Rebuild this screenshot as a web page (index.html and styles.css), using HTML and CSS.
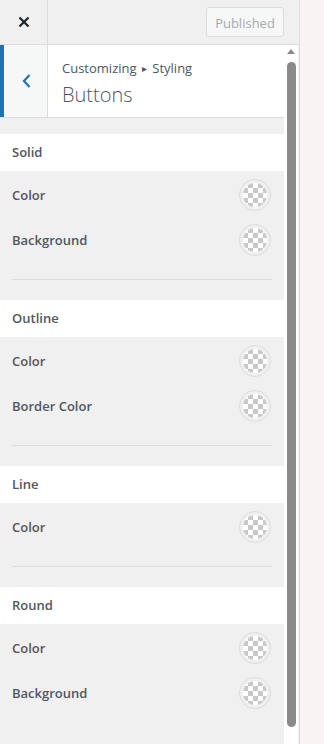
FILE: index.html
```html
<!DOCTYPE html>
<html lang="en">
<head>
  <meta charset="UTF-8" />
  <title>Customizing Buttons</title>
  <link rel="stylesheet" href="styles.css">
</head>
<body>
  <div class="sidebar">
    <div class="topbar">
      <button class="close" aria-label="Close">
        <svg width="12" height="12" viewBox="0 0 12 12"><path d="M1.5 1.5 L10.5 10.5 M10.5 1.5 L1.5 10.5" stroke="#1d2327" stroke-width="2.2"/></svg>
      </button>
      <button class="publish" disabled>Published</button>
    </div>

    <div class="pane">
      <div class="content">
        <div class="heading">
          <button class="back" aria-label="Back">
            <svg width="10" height="16" viewBox="0 0 10 16"><path d="M7.5 2 L2 8 L7.5 14" fill="none" stroke="#2271b1" stroke-width="2.2"/></svg>
          </button>
          <div class="title">
            <span class="crumb">Customizing <span class="sep">&#9656;</span> Styling</span>
            <h2>Buttons</h2>
          </div>
        </div>

        <div class="group">
          <h3>Solid</h3>
          <div class="rows">
            <div class="row"><span>Color</span><i class="swatch"></i></div>
            <div class="row"><span>Background</span><i class="swatch"></i></div>
            <hr>
          </div>
        </div>

        <div class="group">
          <h3>Outline</h3>
          <div class="rows">
            <div class="row"><span>Color</span><i class="swatch"></i></div>
            <div class="row"><span>Border Color</span><i class="swatch"></i></div>
            <hr>
          </div>
        </div>

        <div class="group">
          <h3>Line</h3>
          <div class="rows">
            <div class="row"><span>Color</span><i class="swatch"></i></div>
            <hr>
          </div>
        </div>

        <div class="group">
          <h3>Round</h3>
          <div class="rows">
            <div class="row"><span>Color</span><i class="swatch"></i></div>
            <div class="row"><span>Background</span><i class="swatch"></i></div>
          </div>
        </div>
      </div>

      <div class="scrollbar">
        <span class="arrow"></span>
        <span class="thumb"></span>
      </div>
    </div>
  </div>
</body>
</html>
```

FILE: styles.css
```css
body {
  margin: 0;
  background: #f8f4f4;
  font-family: 'Open Sans', sans-serif;
  color: #50575e;
  height: 744px;
  overflow: hidden;
}

.sidebar {
  width: 299px;
  height: 744px;
  border-right: 1px solid #dcdcde;
  background: #f0f0f1;
  display: flex;
  flex-direction: column;
}

.topbar {
  height: 44px;
  display: flex;
  align-items: center;
  justify-content: space-between;
  border-bottom: 1px solid #dcdcde;
  padding-right: 15px;
}

.close {
  width: 48px;
  height: 44px;
  border: none;
  border-right: 1px solid #dcdcde;
  background: #f0f0f1;
  display: flex;
  align-items: center;
  justify-content: center;
  padding: 0;
}

.publish {
  font-family: 'Open Sans', sans-serif;
  font-size: 13px;
  color: #a7aaad;
  background: #f6f7f7;
  border: 1px solid #dcdcde;
  border-radius: 3px;
  width: 78px;
  height: 30px;
  padding: 1px 0 0;
}

.pane {
  flex: 1;
  display: flex;
  min-height: 0;
}

.content {
  width: 284px;
  background: #f0f0f1;
}

.heading {
  display: flex;
  background: #fff;
  height: 72px;
  border-bottom: 1px solid #dcdcde;
}

.back {
  width: 48px;
  border: none;
  border-left: 4px solid #2271b1;
  border-right: 1px solid #dcdcde;
  background: #f6f7f7;
  display: flex;
  align-items: center;
  justify-content: center;
  padding: 0 0 0 2px;
}

.title {
  padding: 14px 0 0 14px;
}

.crumb {
  display: block;
  font-size: 13px;
  line-height: 18px;
}

.sep {
  font-size: 10px;
  position: relative;
  top: -1px;
  margin: 0 2px;
}

.title h2 {
  margin: 4px 0 0;
  font-size: 20px;
  font-weight: 300;
  line-height: 26px;
}

.group {
  margin-top: 16px;
}

.group + .group {
  margin-top: 20px;
}

.group h3 {
  margin: 0;
  background: #fff;
  height: 37px;
  line-height: 37px;
  padding-left: 12px;
  font-size: 13px;
  font-weight: 600;
}

.rows {
  padding: 1px 12px 0;
}

.row {
  height: 45px;
  display: flex;
  align-items: center;
  justify-content: space-between;
  font-size: 13px;
  font-weight: 600;
}

.swatch {
  width: 32px;
  height: 32px;
  box-sizing: border-box;
  border: 1px solid #dcdcde;
  border-radius: 50%;
  margin-right: 1px;
  padding: 3px;
  background-color: #fff;
  background-image: repeating-conic-gradient(#c8c8c8 0 25%, #fff 0 50%);
  background-size: 10px 10px;
  background-position: 3px 3px;
  background-clip: content-box;
}

.rows hr {
  border: none;
  border-top: 1px solid #dcdcde;
  margin: 17px 0 0;
}

.scrollbar {
  width: 14px;
  background: #fff;
  position: relative;
}

.arrow {
  position: absolute;
  left: 3px;
  top: 4px;
  border-left: 4px solid transparent;
  border-right: 4px solid transparent;
  border-bottom: 5px solid #888;
}

.thumb {
  position: absolute;
  left: 3px;
  top: 17px;
  width: 9px;
  height: 665px;
  background: #8a8a8a;
  border-radius: 5px;
}
```
